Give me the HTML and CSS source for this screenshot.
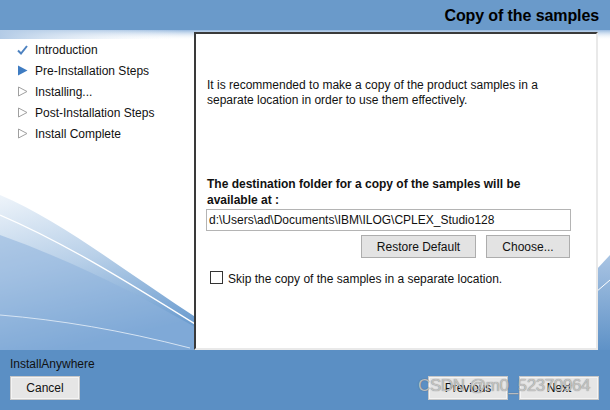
FILE: index.html
```html
<!DOCTYPE html>
<html>
<head>
<meta charset="utf-8">
<link rel="stylesheet" href="styles.css">
</head>
<body>
<div class="window">
  <div class="header"><span class="title">Copy of the samples</span></div>
  <div class="middle">
    <ul class="steps">
      <li class="step done"><span class="mark"><svg width="11" height="10" viewBox="0 0 11 10"><path d="M1 5.5 L4 8.5 L10 1" fill="none" stroke="#4d82c0" stroke-width="2"/></svg></span>Introduction</li>
      <li class="step current"><span class="mark"><svg width="11" height="11" viewBox="0 0 11 11"><path d="M1 0.5 L10.5 5.5 L1 10.5 Z" fill="#3f7cc2"/></svg></span>Pre-Installation Steps</li>
      <li class="step"><span class="mark"><svg width="11" height="11" viewBox="0 0 11 11"><path d="M1.5 1 L10 5.5 L1.5 10 Z" fill="none" stroke="#a0a0a0" stroke-width="1"/></svg></span>Installing...</li>
      <li class="step"><span class="mark"><svg width="11" height="11" viewBox="0 0 11 11"><path d="M1.5 1 L10 5.5 L1.5 10 Z" fill="none" stroke="#a0a0a0" stroke-width="1"/></svg></span>Post-Installation Steps</li>
      <li class="step"><span class="mark"><svg width="11" height="11" viewBox="0 0 11 11"><path d="M1.5 1 L10 5.5 L1.5 10 Z" fill="none" stroke="#a0a0a0" stroke-width="1"/></svg></span>Install Complete</li>
    </ul>
    <div class="panel">
      <p class="intro">It is recommended to make a copy of the product samples in a separate location in order to use them effectively.</p>
      <p class="dest">The destination folder for a copy of the samples will be available at :</p>
      <div class="path">d:\Users\ad\Documents\IBM\ILOG\CPLEX_Studio128</div>
      <div class="actions">
        <span class="btn restore">Restore Default</span>
        <span class="btn choose">Choose...</span>
      </div>
      <label class="skip"><span class="box"></span>Skip the copy of the samples in a separate location.</label>
    </div>
    <div class="rightstrip"></div>
  </div>
  <div class="footer">
    <div class="brand">InstallAnywhere</div>
    <div class="buttons">
      <span class="btn2 cancel">Cancel</span>
      <span class="nav">
        <span class="btn2 prev">Previous</span>
        <span class="btn2 next">Next</span>
      </span>
    </div>
    <div class="watermark">CSDN @m0_52370964</div>
  </div>
</div>
</body>
</html>
```
FILE: styles.css
```css
* { box-sizing: border-box; }
html, body { margin: 0; padding: 0; }
body {
  width: 610px;
  height: 410px;
  overflow: hidden;
  font-family: "Liberation Sans", Arial, sans-serif;
  font-size: 12px;
  color: #111;
}
.window {
  width: 610px;
  height: 410px;
  display: flex;
  flex-direction: column;
  position: relative;
  background: #5b8fc4;
}
.header {
  height: 30px;
  background: #6a9aca;
  display: flex;
  justify-content: flex-end;
  align-items: center;
  padding: 2px 11px 0 0;
}
.title {
  font-weight: bold;
  font-size: 16px;
  color: #000;
  letter-spacing: -0.1px;
}
.middle {
  height: 320px;
  display: flex;
  background-color: #ffffff;
  background-image: url("data:image/svg+xml,%3Csvg xmlns='http://www.w3.org/2000/svg' width='610' height='320'%3E%3Cdefs%3E%3ClinearGradient id='t' x1='0' y1='0' x2='1' y2='0'%3E%3Cstop offset='0' stop-color='%23b3cbe6'/%3E%3Cstop offset='0.8' stop-color='%23ffffff' stop-opacity='0'/%3E%3C/linearGradient%3E%3ClinearGradient id='v' x1='0' y1='0' x2='0' y2='1'%3E%3Cstop offset='0' stop-color='%2396b8de'/%3E%3Cstop offset='1' stop-color='%23ffffff' stop-opacity='0'/%3E%3C/linearGradient%3E%3ClinearGradient id='s' x1='0' y1='0' x2='0.3' y2='1'%3E%3Cstop offset='0' stop-color='%23eef4fa'/%3E%3Cstop offset='0.5' stop-color='%23b7cfe8'/%3E%3Cstop offset='1' stop-color='%236e9ed0'/%3E%3C/linearGradient%3E%3ClinearGradient id='r' x1='0' y1='0' x2='0' y2='1'%3E%3Cstop offset='0' stop-color='%23a9c4e3'/%3E%3Cstop offset='1' stop-color='%235f92c7'/%3E%3C/linearGradient%3E%3C/defs%3E%3Crect x='0' y='0' width='610' height='10' fill='url(%23v)'/%3E%3Crect x='0' y='0' width='230' height='9' fill='url(%23t)'/%3E%3Cpath d='M0 165 C60 190 130 245 200 290 L200 320 L0 320 Z' fill='url(%23s)'/%3E%3Cpath d='M0 205 C70 230 140 265 200 300 L200 320 L0 320 Z' fill='%238eb3dc' opacity='0.55'/%3E%3Cpath d='M0 185 C70 215 140 260 200 297' fill='none' stroke='%23ffffff' stroke-width='1.3'/%3E%3Cpath d='M0 285 C60 290 120 300 190 318' fill='none' stroke='%23d6e4f3' stroke-width='1'/%3E%3Cpath d='M596 240 L610 225 L610 320 L596 320 Z' fill='url(%23r)'/%3E%3Cpath d='M596 262 L610 250' stroke='%23ffffff' stroke-width='1'/%3E%3C/svg%3E");
  background-repeat: no-repeat;
}
.steps {
  list-style: none;
  margin: 0;
  padding: 9px 0 0 17px;
  width: 194px;
  flex: none;
}
.step {
  height: 21px;
  display: flex;
  align-items: center;
  color: #111;
}
.mark {
  width: 18px;
  display: inline-flex;
  align-items: center;
}
.panel {
  width: 404px;
  flex: none;
  margin-top: 2px;
  height: 318px;
  background: #fff;
  border-left: 2px solid #3a3a3a;
  border-top: 2px solid #3a3a3a;
  border-right: 2px solid #e9e9e9;
  border-bottom: 2px solid #e9e9e9;
  padding: 0 0 0 11px;
  display: flex;
  flex-direction: column;
}
.intro {
  margin: 44px 0 0 0;
  line-height: 15px;
  width: 360px;
}
.dest {
  margin: 68px 0 0 0;
  font-weight: bold;
  line-height: 16px;
  width: 320px;
}
.path {
  margin: 1px 0 0 -1px;
  width: 365px;
  height: 22px;
  border: 1px solid #b4b4b4;
  display: flex;
  align-items: center;
  padding-left: 2px;
  background: #fff;
}
.actions {
  margin-top: 4px;
  width: 363px;
  display: flex;
  justify-content: flex-end;
  gap: 10px;
}
.btn {
  height: 23px;
  background: #e3e3e3;
  border: 1px solid #adadad;
  display: inline-flex;
  align-items: center;
  justify-content: center;
}
.restore { width: 115px; }
.choose { width: 84px; }
.skip {
  margin: 13px 0 0 3px;
  display: flex;
  align-items: center;
  height: 16px;
}
.box {
  width: 13px;
  height: 13px;
  border: 1px solid #333;
  background: #fff;
  margin-right: 5px;
  margin-top: -4px;
}
.rightstrip { flex: 1; }
.footer {
  flex: 1;
  background: #5b8fc4;
  padding: 6px 10px 0 10px;
  position: relative;
}
.brand {
  color: #111;
  height: 16px;
  line-height: 16px;
}
.buttons {
  margin-top: 4px;
  display: flex;
  justify-content: space-between;
  align-items: center;
}
.nav { display: flex; gap: 11px; margin-right: 1px; }
.btn2 {
  height: 24px;
  width: 80px;
  background: #e6e6e6;
  border: 1px solid #c8c8c8;
  outline: 1px solid #f4f4f4;
  outline-offset: -2px;
  display: inline-flex;
  align-items: center;
  justify-content: center;
  color: #111;
}
.cancel { width: 70px; }
.watermark {
  position: absolute;
  left: 418px;
  top: 26px;
  font-size: 17px;
  color: rgba(205, 205, 205, 0.85);
  text-shadow: 0 0 1px rgba(70, 70, 70, 0.7);
  letter-spacing: -0.4px;
  white-space: nowrap;
}
```
